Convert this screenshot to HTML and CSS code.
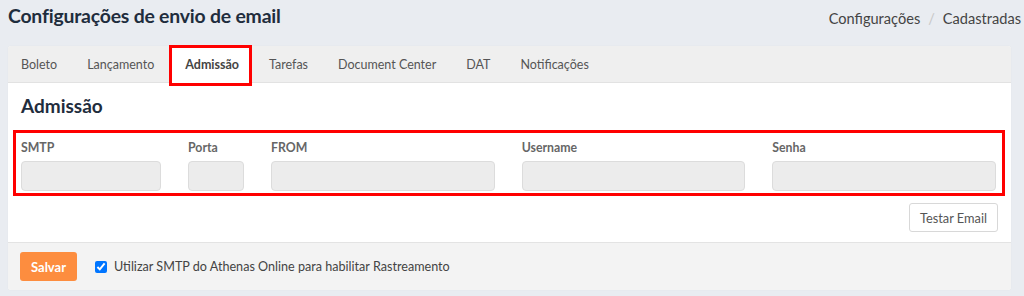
FILE: index.html
```html
<!DOCTYPE html>
<html lang="pt-BR">
<head>
<meta charset="utf-8">
<link rel="stylesheet" href="styles.css">
</head>
<body>
<div class="page">
  <div class="topbar">
    <h1 class="title">Configurações de envio de email</h1>
    <nav class="crumbs"><span>Configurações</span><span class="sep">/</span><span>Cadastradas</span></nav>
  </div>
  <div class="card">
    <ul class="tabs">
      <li class="tab">Boleto</li>
      <li class="tab">Lançamento</li>
      <li class="tab active">Admissão</li>
      <li class="tab">Tarefas</li>
      <li class="tab">Document Center</li>
      <li class="tab">DAT</li>
      <li class="tab">Notificações</li>
    </ul>
    <div class="card-body">
      <h2 class="section">Admissão</h2>
      <div class="fields">
        <div class="field"><label>SMTP</label><input class="input" type="text"></div>
        <div class="field"><label>Porta</label><input class="input" type="text"></div>
        <div class="field"><label>FROM</label><input class="input" type="text"></div>
        <div class="field"><label>Username</label><input class="input" type="text"></div>
        <div class="field"><label>Senha</label><input class="input" type="password"></div>
      </div>
      <div class="actions"><button class="btn-test">Testar Email</button></div>
    </div>
    <div class="card-footer">
      <button class="btn-save">Salvar</button>
      <label class="check"><input type="checkbox" checked><span>Utilizar SMTP do Athenas Online para habilitar Rastreamento</span></label>
    </div>
  </div>
</div>
</body>
</html>
```
FILE: styles.css
```css
* { box-sizing: border-box; }
html, body { margin: 0; padding: 0; }
body {
  background: #e9ecf1;
  font-family: Lato, "Open Sans", sans-serif;
  color: #555;
  width: 1024px;
  height: 296px;
  overflow: hidden;
}
.page { padding: 0 0 0 8px; }
.topbar {
  display: flex;
  justify-content: space-between;
  align-items: flex-start;
  height: 46px;
}
.title {
  margin: 4px 0 0 0;
  font-size: 19.4px;
  font-weight: 700;
  color: #1f2d3d;
  letter-spacing: -0.2px;
}
.crumbs {
  margin-top: 10px;
  font-size: 14.6px;
  color: #444;
  display: flex;
  gap: 8px;
  padding-right: 3px;
}
.crumbs .sep { color: #c8c8c8; }
.card {
  width: 1003px;
  background: #fff;
  border-radius: 3px;
  box-shadow: 0 0 1px rgba(0,0,0,0.1);
}
.tabs {
  list-style: none;
  margin: 0;
  padding: 0;
  display: flex;
  height: 37px;
  background: #efefef;
  border-bottom: 1px solid #e2e2e2;
  border-radius: 3px 3px 0 0;
}
.tab {
  font-size: 12.5px;
  color: #555;
  padding: 0 15px;
  line-height: 37px;
}
.tab:first-child { padding-left: 13px; }
.tab.active {
  background: #fff;
  color: #444;
  font-weight: 700;
  margin: 2px 5px -1px 3px;
  padding: 0 10px 0 13px;
  line-height: 34px;
  outline: 3px solid #f00;
}
.card-body { padding: 11px 13px 10px 13px; }
.section {
  margin: 0 0 12px 0;
  font-size: 19px;
  font-weight: 700;
  color: #1f2d3d;
  line-height: 24px;
}
.fields {
  margin: 0 -7px 0 -8px;
  border: 3px solid #f00;
  padding: 7px 6px 2px 5px;
  display: grid;
  grid-template-columns: 140px 56px 1fr 1fr 1fr;
  column-gap: 27px;
}
.field { display: flex; flex-direction: column; }
.field label {
  font-size: 12.3px;
  font-weight: 700;
  color: #666;
  line-height: 16px;
  margin-bottom: 5px;
}
.input {
  height: 30px;
  width: 100%;
  background: #ececec;
  border: 1px solid #dcdcdc;
  border-radius: 4px;
}
.actions {
  display: flex;
  justify-content: flex-end;
  margin-top: 7px;
}
.btn-test {
  font-family: inherit;
  font-size: 12.8px;
  color: #555;
  background: #fff;
  border: 1px solid #d8d8d8;
  border-radius: 3px;
  height: 29px;
  padding: 0 10px;
}
.card-footer {
  background: #f3f3f3;
  border-top: 1px solid #e3e3e3;
  height: 48px;
  display: flex;
  align-items: center;
  padding: 0 12px;
  border-radius: 0 0 3px 3px;
}
.btn-save {
  font-family: inherit;
  font-size: 13px;
  font-weight: 700;
  color: #fff;
  background: #fd8d3f;
  border: none;
  border-radius: 3px;
  height: 29px;
  width: 57px;
}
.check {
  display: flex;
  align-items: center;
  margin-left: 18px;
  font-size: 12.6px;
  color: #444;
}
.check input { margin: 0 7px 0 0; width: 12px; height: 12px; }
```
